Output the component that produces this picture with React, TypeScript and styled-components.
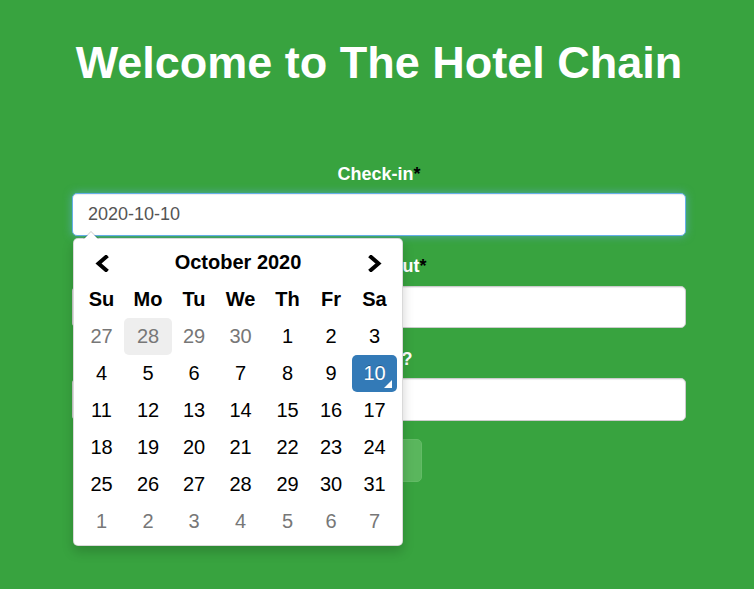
import React, { useEffect, useRef } from "react";
import styled, { createGlobalStyle } from "styled-components";

const Global = createGlobalStyle`
  html, body { margin: 0; padding: 0; }
  body {
    background: #38a33f;
    font-family: "Liberation Sans", Arial, sans-serif;
    font-size: 18px;
    line-height: 1.42857;
    color: #333;
  }
  * { box-sizing: border-box; }
`;

const Page = styled.div`
  padding: 37.5px 68px 0 72px;
  min-height: 589px;
`;

const Title = styled.h1`
  margin: 0;
  font-size: 45px;
  line-height: 1.1;
  font-weight: 700;
  color: #fff;
  text-align: center;
`;

const Form = styled.form`
  margin-top: 74.75px;
`;

const Group = styled.div`
  position: relative;
  margin-bottom: 18.75px;
  text-align: center;
`;

const Label = styled.label`
  display: block;
  margin-bottom: 6.25px;
  font-weight: 700;
  line-height: 25px;
  color: #fff;
`;

const Star = styled.span`
  color: #000;
`;

const Field = styled.input<{ $focused?: boolean }>`
  display: block;
  width: 100%;
  height: 42.5px;
  padding: 7.5px 15px;
  font-family: inherit;
  font-size: 18px;
  color: #555;
  background: #fff;
  border: 1px solid ${(p) => (p.$focused ? "#66afe9" : "#ccc")};
  border-radius: 5px;
  outline: none;
  box-shadow: ${(p) =>
    p.$focused
      ? "inset 0 1px 1px rgba(0,0,0,.075), 0 0 8px rgba(102,175,233,.6)"
      : "inset 0 1px 1px rgba(0,0,0,.075)"};
`;

const Submit = styled.button`
  display: inline-block;
  height: 42.5px;
  padding: 0 20px;
  font-family: inherit;
  font-size: 18px;
  color: #fff;
  background: #5ab65d;
  border: 1px solid #63bb66;
  border-radius: 5px;
`;

const Picker = styled.div`
  position: absolute;
  top: calc(100% + 2.5px);
  left: 1px;
  width: 330px;
  padding: 5px;
  font-size: 20px;
  background: #fff;
  border: 1px solid rgba(0, 0, 0, 0.15);
  border-radius: 5px;
  box-shadow: 0 6px 12px rgba(0, 0, 0, 0.175);
  z-index: 10;
  &::before {
    content: "";
    position: absolute;
    top: -8px;
    left: 9px;
    border-left: 8px solid transparent;
    border-right: 8px solid transparent;
    border-bottom: 8px solid rgba(0, 0, 0, 0.2);
  }
  &::after {
    content: "";
    position: absolute;
    top: -7px;
    left: 10px;
    border-left: 7px solid transparent;
    border-right: 7px solid transparent;
    border-bottom: 7px solid #fff;
  }
`;

const Table = styled.table`
  width: 100%;
  table-layout: fixed;
  border-collapse: separate;
  border-spacing: 0;
`;

const HeadCell = styled.th`
  height: 37px;
  padding: 0;
  text-align: center;
  font-weight: 700;
  color: #000;
  border-radius: 5px;
`;

const Nav = styled.span`
  display: inline-flex;
  align-items: center;
  justify-content: center;
  vertical-align: middle;
`;

const Day = styled.td<{ $muted?: boolean; $active?: boolean; $hover?: boolean }>`
  position: relative;
  height: 37px;
  padding: 0;
  text-align: center;
  border-radius: 5px;
  color: ${(p) => (p.$active ? "#fff" : p.$muted ? "#777" : "#000")};
  background: ${(p) => (p.$active ? "#337ab7" : p.$hover ? "#eee" : "transparent")};
  text-shadow: ${(p) => (p.$active ? "0 -1px 0 rgba(0,0,0,.25)" : "none")};
  &::before {
    content: "";
    display: ${(p) => (p.$active ? "block" : "none")};
    position: absolute;
    right: 5px;
    bottom: 4px;
    border-style: solid;
    border-color: transparent;
    border-width: 0 0 8px 8px;
    border-bottom-color: #fff;
  }
`;

const colWidths = [45, 48, 44, 49, 45, 42, 45];
const dows = ["Su", "Mo", "Tu", "We", "Th", "Fr", "Sa"];

type Cell = { n: number; muted?: boolean; active?: boolean; hover?: boolean };

const weeks: Cell[][] = [
  [
    { n: 27, muted: true },
    { n: 28, muted: true, hover: true },
    { n: 29, muted: true },
    { n: 30, muted: true },
    { n: 1 },
    { n: 2 },
    { n: 3 },
  ],
  [4, 5, 6, 7, 8, 9].map((n) => ({ n })).concat([{ n: 10, active: true } as Cell]),
  [11, 12, 13, 14, 15, 16, 17].map((n) => ({ n })),
  [18, 19, 20, 21, 22, 23, 24].map((n) => ({ n })),
  [25, 26, 27, 28, 29, 30, 31].map((n) => ({ n })),
  [1, 2, 3, 4, 5, 6, 7].map((n) => ({ n, muted: true })),
];

const Chevron = ({ dir }: { dir: "left" | "right" }) => (
  <svg width="14" height="17" viewBox="0 0 14 17" aria-hidden="true">
    <polyline
      points={dir === "left" ? "11,2 3.5,8.5 11,15" : "3,2 10.5,8.5 3,15"}
      fill="none"
      stroke="#000"
      strokeWidth="4"
      strokeLinejoin="miter"
      strokeLinecap="square"
    />
  </svg>
);

export default function App() {
  const ref = useRef<HTMLInputElement>(null);
  useEffect(() => {
    const el = ref.current;
    if (el) {
      el.focus();
      el.setSelectionRange(4, 4);
    }
  }, []);

  return (
    <>
      <Global />
      <Page>
        <Title>Welcome to The Hotel Chain</Title>
        <Form onSubmit={(e) => e.preventDefault()}>
          <Group>
            <Label htmlFor="checkin">
              Check-in<Star>*</Star>
            </Label>
            <Field id="checkin" ref={ref} $focused defaultValue="2020-10-10" />
            <Picker>
              <Table>
                <colgroup>
                  {colWidths.map((w, i) => (
                    <col key={i} style={{ width: w }} />
                  ))}
                </colgroup>
                <thead>
                  <tr>
                    <HeadCell>
                      <Nav>
                        <Chevron dir="left" />
                      </Nav>
                    </HeadCell>
                    <HeadCell colSpan={5}>October 2020</HeadCell>
                    <HeadCell>
                      <Nav>
                        <Chevron dir="right" />
                      </Nav>
                    </HeadCell>
                  </tr>
                  <tr>
                    {dows.map((d) => (
                      <HeadCell key={d}>{d}</HeadCell>
                    ))}
                  </tr>
                </thead>
                <tbody>
                  {weeks.map((w, i) => (
                    <tr key={i}>
                      {w.map((c, j) => (
                        <Day key={j} $muted={c.muted} $active={c.active} $hover={c.hover}>
                          {c.n}
                        </Day>
                      ))}
                    </tr>
                  ))}
                </tbody>
              </Table>
            </Picker>
          </Group>
          <Group>
            <Label htmlFor="checkout">
              Check-out<Star>*</Star>
            </Label>
            <Field id="checkout" />
          </Group>
          <Group>
            <Label htmlFor="adults">Adults?</Label>
            <Field id="adults" />
          </Group>
          <Group>
            <Submit type="submit">Login</Submit>
          </Group>
        </Form>
      </Page>
    </>
  );
}
